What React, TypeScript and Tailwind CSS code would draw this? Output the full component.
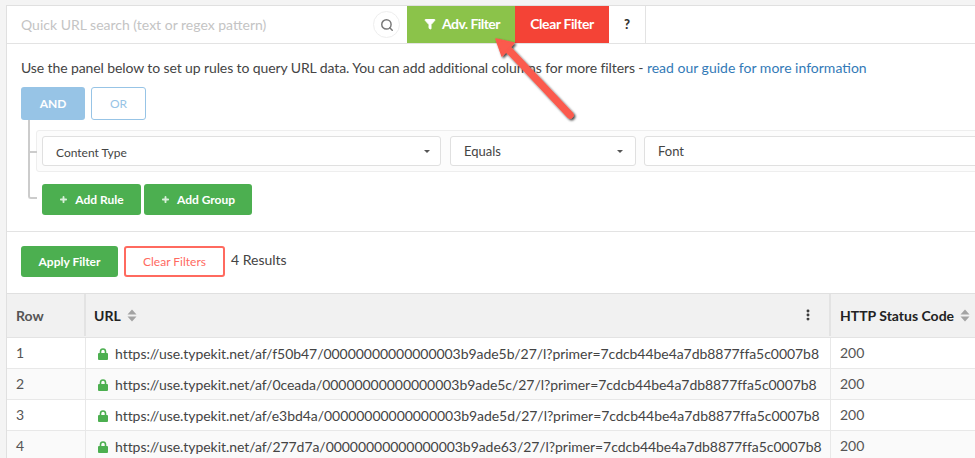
import React from "react";
import { Search, Funnel, Plus, EllipsisVertical } from "lucide-react";

const rows = [
  ["1", "https://use.typekit.net/af/f50b47/00000000000000003b9ade5b/27/l?primer=7cdcb44be4a7db8877ffa5c0007b8"],
  ["2", "https://use.typekit.net/af/0ceada/00000000000000003b9ade5c/27/l?primer=7cdcb44be4a7db8877ffa5c0007b8"],
  ["3", "https://use.typekit.net/af/e3bd4a/00000000000000003b9ade5d/27/l?primer=7cdcb44be4a7db8877ffa5c0007b8"],
  ["4", "https://use.typekit.net/af/277d7a/00000000000000003b9ade63/27/l?primer=7cdcb44be4a7db8877ffa5c0007b8"],
];

function Sort() {
  return (
    <svg width="10" height="13" viewBox="0 0 10 13" className="ml-[6px] shrink-0">
      <path d="M5 0.5L9.5 5.5H0.5Z M0.5 7.5H9.5L5 12.5Z" fill="#a3a3a3" />
    </svg>
  );
}

function Caret() {
  return (
    <svg width="6" height="3" viewBox="0 0 6 3" className="shrink-0">
      <path d="M0 0H6L3 3Z" fill="#555" />
    </svg>
  );
}

function LockIcon() {
  return (
    <svg width="10" height="12" viewBox="0 0 10 12" className="shrink-0">
      <path d="M2.5 6V3.6C2.5 2.1 3.5 1 5 1C6.5 1 7.5 2.1 7.5 3.6V6" fill="none" stroke="#4caf50" strokeWidth="1.6" />
      <rect x="0" y="5" width="10" height="7" rx="1" fill="#4caf50" />
    </svg>
  );
}

export default function App() {
  return (
    <div className="relative h-[458px] w-[975px] overflow-hidden bg-[#f4f4f4] pl-[6px] pt-[5px] font-['Lato',sans-serif] text-[#444]">
      <div className="h-[453px] w-[969px] overflow-hidden border-l border-t border-[#e0e0e0] bg-white">
        <div className="flex h-[38px] border-b border-[#e3e3e3]">
          <div className="flex w-[400px] items-center justify-between pl-[14px] pr-[7px]">
            <span className="text-[14px] text-[#c4c4c4]">Quick URL search (text or regex pattern)</span>
            <span className="flex h-[27px] w-[27px] items-center justify-center rounded-full border border-[#eeeeee]">
              <Search size={14} strokeWidth={2.5} color="#777" />
            </span>
          </div>
          <div className="flex w-[108px] items-center justify-center gap-[6px] bg-[#8bc34a] pb-[2px] pl-[2px] text-[14px] font-bold tracking-[-0.55px] text-white">
            <Funnel size={12} fill="white" color="white" />
            Adv. Filter
          </div>
          <div className="flex w-[94px] items-center justify-center bg-[#f44336] pb-[2px] text-[14px] font-bold tracking-[-0.4px] text-white">Clear Filter</div>
          <div className="flex w-[37px] items-center justify-center border-r border-[#e3e3e3] text-[13px] font-black text-[#333]">?</div>
        </div>

        <div className="h-[188px] border-b border-[#e3e3e3] pl-[14px] pt-[14px]">
          <p className="whitespace-nowrap text-[14px] leading-[20px] text-[#444]">
            <span className="tracking-[-0.105px]">Use the panel below to set up rules to query URL data. You can add additional columns for more filters - </span>
            <span className="text-[#337ab7]">read our guide for more information</span>
          </p>
          <div className="mt-[9px] flex gap-[6px]">
            <div className="flex h-[33px] w-[64px] items-center justify-center rounded-[3px] bg-[#97c4e6] text-[12px] font-bold text-white">AND</div>
            <div className="flex h-[33px] w-[55px] items-center justify-center rounded-[3px] border border-[#97c4e6] text-[12px] text-[#97c4e6]">OR</div>
          </div>
          <div className="flex">
            <div className="ml-[7px] h-[79px] w-[9px] shrink-0 rounded-bl-[3px] border-b-2 border-l-2 border-[#ccc]" />
            <div className="-ml-[1px] shrink-0">
              <div className="relative mt-[10px] flex h-[42px] w-[960px] items-center rounded-[3px] border border-[#eee] bg-[#fcfcfc] pl-[5px]">
                <span className="absolute -left-[8px] top-[20px] h-[2px] w-[8px] bg-[#ccc]" />
                <div className="flex h-[30px] w-[399px] items-center justify-between rounded-[3px] border border-[#e0e0e0] bg-white pl-[13px] pr-[10px] text-[12px] text-[#444]">
                  <span className="pt-[3px]">Content Type</span>
                  <Caret />
                </div>
                <div className="ml-[9px] flex h-[30px] w-[186px] items-center justify-between rounded-[3px] border border-[#e0e0e0] bg-white pl-[13px] pr-[12px] pt-[1px] text-[13px] text-[#444]">
                  Equals
                  <Caret />
                </div>
                <div className="ml-[8px] flex h-[30px] w-[340px] items-center rounded-[3px] border border-[#e0e0e0] bg-white pl-[13px] pt-[1px] text-[13px] text-[#444]">Font</div>
              </div>
              <div className="mt-[12px] flex gap-[3px] pl-[6px]">
                <div className="flex h-[31px] w-[99px] items-center justify-center gap-[7px] rounded-[3px] bg-[#4caf50] text-[12px] font-bold text-white">
                  <Plus size={9} strokeWidth={5} color="#d8efd9" />
                  Add Rule
                </div>
                <div className="flex h-[31px] w-[108px] items-center justify-center gap-[7px] rounded-[3px] bg-[#4caf50] text-[12px] font-bold text-white">
                  <Plus size={9} strokeWidth={5} color="#d8efd9" />
                  Add Group
                </div>
              </div>
            </div>
          </div>
        </div>

        <div className="flex h-[61px] items-start gap-[6px] pl-[14px] pt-[14px]">
          <div className="flex h-[31px] w-[97px] items-center justify-center rounded-[3px] bg-[#4caf50] text-[12px] font-bold text-white">Apply Filter</div>
          <div className="flex h-[31px] w-[101px] items-center justify-center rounded-[3px] border-2 border-[#ff6a5f] text-[12px] text-[#ff6a5f]">Clear Filters</div>
          <span className="mt-[4px] text-[14px] leading-[20px] text-[#444]">4 Results</span>
        </div>

        <div className="border-t border-[#e0e0e0]">
          <div className="flex h-[44px] border-b border-[#e3e3e3] bg-[#f1f1f1] pb-[1px] text-[14px] font-bold">
            <div className="flex w-[79px] items-center border-r-2 border-[#e3e3e3] pl-[9px] text-[#555]">Row</div>
            <div className="flex w-[745px] items-center border-r-2 border-[#e3e3e3] pl-[8px] text-[#222]">
              URL
              <Sort />
              <EllipsisVertical size={14} strokeWidth={3} color="#333" className="ml-auto mr-[14px]" />
            </div>
            <div className="flex flex-1 items-center whitespace-nowrap pl-[9px] text-[#222]">
              HTTP Status Code
              <Sort />
            </div>
          </div>
          {rows.map((r, i) => (
            <div key={r[0]} className={`flex h-[31px] border-b border-[#e8e8e8] text-[14px] ${i % 2 ? "bg-[#fafafa]" : "bg-white"}`}>
              <div className="flex w-[79px] items-center border-r border-[#e8e8e8] pb-[1px] pl-[9px] text-[#555]">{r[0]}</div>
              <div className="flex w-[745px] items-center gap-[7px] whitespace-nowrap border-r border-[#e8e8e8] pl-[12px] pt-[1px] tracking-[-0.05px] text-[#444]">
                <LockIcon />
                {r[1]}
              </div>
              <div className="flex flex-1 items-center pb-[1px] pl-[9px] text-[#555]">200</div>
            </div>
          ))}
        </div>
      </div>

      <svg className="pointer-events-none absolute left-[480px] top-[30px]" width="110" height="110" viewBox="0 0 110 110">
        <defs>
          <filter id="arrow-shadow" x="-20%" y="-20%" width="150%" height="150%">
            <feDropShadow dx="1.5" dy="1.5" stdDeviation="1" floodColor="#000" floodOpacity="0.75" />
          </filter>
        </defs>
        <g filter="url(#arrow-shadow)">
          <path d="M26 17L90 85" stroke="#fb5a4d" strokeWidth="7.5" strokeLinecap="round" />
          <path d="M16 9L34 13L22 26Z" fill="#fb5a4d" stroke="#fb5a4d" strokeWidth="1.5" strokeLinejoin="round" />
        </g>
      </svg>
    </div>
  );
}
